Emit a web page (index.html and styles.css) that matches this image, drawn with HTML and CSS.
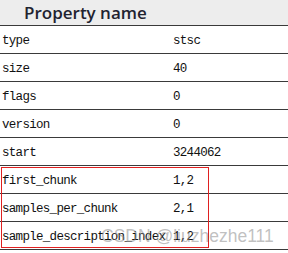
FILE: index.html
```html
<!DOCTYPE html>
<html>
<head>
<meta charset="utf-8">
<link rel="stylesheet" href="styles.css">
</head>
<body>
<div class="table">
  <div class="head"><span class="head-title">Property name</span></div>
  <div class="row"><span class="key">type</span><span class="val">stsc</span></div>
  <div class="row"><span class="key">size</span><span class="val">40</span></div>
  <div class="row"><span class="key">flags</span><span class="val">0</span></div>
  <div class="row"><span class="key">version</span><span class="val">0</span></div>
  <div class="row"><span class="key">start</span><span class="val">3244062</span></div>
  <div class="group">
    <div class="row"><span class="key">first_chunk</span><span class="val">1,2</span></div>
    <div class="row"><span class="key">samples_per_chunk</span><span class="val">2,1</span></div>
    <div class="row"><span class="key">sample_description_index</span><span class="val">1,2</span></div>
    <div class="highlight"></div>
  </div>
</div>
<div class="watermark">CSDN @liuzhezhe111</div>
</body>
</html>
```
FILE: styles.css
```css
html, body {
  margin: 0;
  padding: 0;
  background: #ffffff;
  width: 288px;
  height: 253px;
  overflow: hidden;
  position: relative;
}
.table {
  display: flex;
  flex-direction: column;
  width: 288px;
}
.head {
  height: 26px;
  background: #ededed;
  border-bottom: 1px solid #3a3a3a;
  box-sizing: border-box;
  display: flex;
  align-items: center;
  padding-left: 24px;
}
.head-title {
  font-family: "Open Sans", sans-serif;
  font-weight: 600;
  font-size: 17px;
  color: #1f2330;
  line-height: 1;
}
.row {
  height: 28px;
  border-bottom: 1px solid #3a3a3a;
  box-sizing: border-box;
  display: grid;
  grid-template-columns: 171px 1fr;
  align-items: center;
  padding-left: 2px;
  font-family: "Liberation Mono", monospace;
  font-size: 12.5px;
  letter-spacing: -0.7px;
  color: #111;
  white-space: nowrap;
}
.key, .val {
  padding-top: 2px;
}
.group {
  position: relative;
  display: flex;
  flex-direction: column;
}
.highlight {
  position: absolute;
  left: 1px;
  top: 1px;
  width: 208px;
  height: 81px;
  border: 1px solid #e02020;
  box-sizing: border-box;
}
.watermark {
  position: absolute;
  left: 101px;
  top: 228px;
  font-family: "Liberation Sans", sans-serif;
  font-size: 17.5px;
  color: rgba(140, 140, 140, 0.55);
  white-space: nowrap;
  line-height: 1;
}
```
